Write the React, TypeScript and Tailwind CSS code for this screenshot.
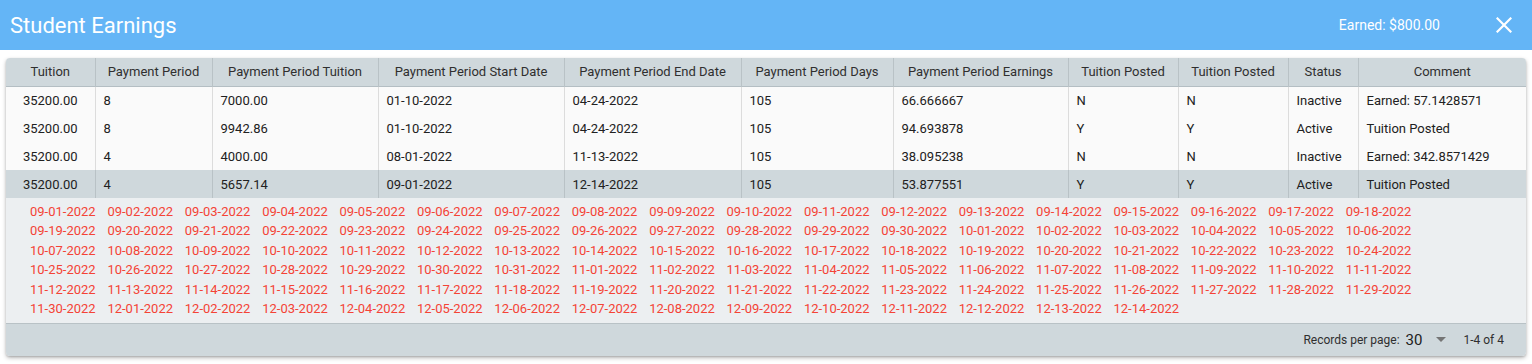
import React from "react";

type Row = {
  tuition: string;
  period: string;
  periodTuition: string;
  start: string;
  end: string;
  days: string;
  earnings: string;
  posted1: string;
  posted2: string;
  status: string;
  comment: string;
};

const rows: Row[] = [
  { tuition: "35200.00", period: "8", periodTuition: "7000.00", start: "01-10-2022", end: "04-24-2022", days: "105", earnings: "66.666667", posted1: "N", posted2: "N", status: "Inactive", comment: "Earned: 57.1428571" },
  { tuition: "35200.00", period: "8", periodTuition: "9942.86", start: "01-10-2022", end: "04-24-2022", days: "105", earnings: "94.693878", posted1: "Y", posted2: "Y", status: "Active", comment: "Tuition Posted" },
  { tuition: "35200.00", period: "4", periodTuition: "4000.00", start: "08-01-2022", end: "11-13-2022", days: "105", earnings: "38.095238", posted1: "N", posted2: "N", status: "Inactive", comment: "Earned: 342.8571429" },
  { tuition: "35200.00", period: "4", periodTuition: "5657.14", start: "09-01-2022", end: "12-14-2022", days: "105", earnings: "53.877551", posted1: "Y", posted2: "Y", status: "Active", comment: "Tuition Posted" },
];

const columns = [
  { label: "Tuition", width: 89 },
  { label: "Payment Period", width: 117 },
  { label: "Payment Period Tuition", width: 166 },
  { label: "Payment Period Start Date", width: 186 },
  { label: "Payment Period End Date", width: 177 },
  { label: "Payment Period Days", width: 152 },
  { label: "Payment Period Earnings", width: 175 },
  { label: "Tuition Posted", width: 110 },
  { label: "Tuition Posted", width: 110 },
  { label: "Status", width: 70 },
  { label: "Comment", width: 168 },
];

function buildDates() {
  const out: string[] = [];
  const d = new Date(2022, 8, 1);
  const end = new Date(2022, 11, 14);
  while (d <= end) {
    const mm = String(d.getMonth() + 1).padStart(2, "0");
    const dd = String(d.getDate()).padStart(2, "0");
    out.push(`${mm}-${dd}-${d.getFullYear()}`);
    d.setDate(d.getDate() + 1);
  }
  return out;
}

const dates = buildDates();

export default function App() {
  return (
    <div className="min-h-[364px] bg-white text-[13px] text-[#212121]" style={{ fontFamily: "Roboto, 'Noto Sans', sans-serif" }}>
      <div className="flex h-[50px] items-center justify-between bg-[#64b5f6] pl-[10px] pr-[18px] text-white">
        <h1 className="text-[22px] font-normal">Student Earnings</h1>
        <div className="flex items-center gap-[56px]">
          <span className="text-[14px]">Earned: $800.00</span>
          <svg width="16" height="16" viewBox="0 0 16 16" className="mr-[2px]">
            <path d="M1.5 1.5 L14.5 14.5 M14.5 1.5 L1.5 14.5" stroke="white" strokeWidth="2.2" strokeLinecap="square" />
          </svg>
        </div>
      </div>

      <div className="mx-[6px] mt-[8px] overflow-hidden rounded-[4px] shadow-[0_2px_4px_rgba(0,0,0,0.25),0_1px_2px_rgba(0,0,0,0.15)]">
        <table className="w-full table-fixed border-collapse">
          <colgroup>
            {columns.map((c, i) => (
              <col key={i} style={{ width: c.width }} />
            ))}
          </colgroup>
          <thead>
            <tr className="h-[28px] border-b border-[#b4bec3] bg-[#cfd8dc]">
              {columns.map((c, i) => (
                <th key={i} className={`px-1 text-center font-normal text-[#2f2f2f] ${i > 0 ? "border-l border-[#b9c2c6]" : ""}`}>
                  {c.label}
                </th>
              ))}
            </tr>
          </thead>
          <tbody>
            {rows.map((r, idx) => {
              const cells = [r.tuition, r.period, r.periodTuition, r.start, r.end, r.days, r.earnings, r.posted1, r.posted2, r.status, r.comment];
              const selected = idx === rows.length - 1;
              return (
                <tr key={idx} className={`h-[28px] ${selected ? "bg-[#cfd8dc]" : "bg-[#fafafa]"}`}>
                  {cells.map((v, i) => (
                    <td
                      key={i}
                      className={`whitespace-nowrap pt-[1px] ${i === 0 ? "text-center" : "px-[8px] text-left"} ${i > 0 ? (selected ? "border-l border-[#b9c2c6]" : "border-l border-[#dcdcdc]") : ""}`}
                    >
                      {v}
                    </td>
                  ))}
                </tr>
              );
            })}
          </tbody>
        </table>

        <div className="flex flex-wrap bg-[#eceff1] pb-[5px] pl-[24px] pr-[40px] pt-[4px] leading-[19.4px] text-[#f44336]">
          {dates.map((d) => (
            <span key={d} className="w-[77.4px]">
              {d}
            </span>
          ))}
        </div>

        <div className="flex h-[33px] items-center justify-end border-t border-[#b9c2c6] bg-[#cfd8dc] pr-[22px] text-[12px] text-[#2f2f2f]">
          <span>Records per page:</span>
          <span className="ml-[6px] text-[15px] text-[#212121]">30</span>
          <svg width="10" height="6" viewBox="0 0 10 6" className="ml-[14px]">
            <path d="M0 0 L10 0 L5 5 Z" fill="#757575" />
          </svg>
          <span className="ml-[17px]">1-4 of 4</span>
        </div>
      </div>
    </div>
  );
}
